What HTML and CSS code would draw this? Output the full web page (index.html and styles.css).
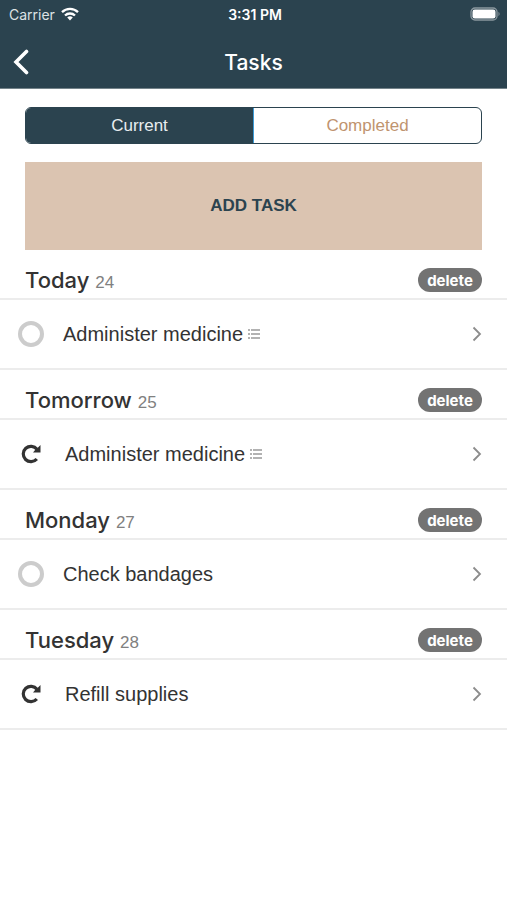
FILE: index.html
```html
<!DOCTYPE html>
<html lang="en">
<head>
<meta charset="utf-8">
<meta name="viewport" content="width=device-width, initial-scale=1">
<title>Tasks</title>
<link rel="stylesheet" href="styles.css">
</head>
<body>
<svg class="defs" aria-hidden="true">
  <symbol id="list" viewBox="0 0 12 10"><path d="M0 1h2M0 5h2M0 9h2M3 1h9M3 5h9M3 9h9" fill="none" stroke="currentColor" stroke-width="1.600"/></symbol>
  <symbol id="chevron" viewBox="0 0 10 16"><path d="M1.500 1.500L8 8l-6.500 6.500" fill="none" stroke="currentColor" stroke-width="1.800"/></symbol>
  <symbol id="repeat" viewBox="0 0 20 20"><path d="M15.800 15A7.700 7.700 0 1 1 16 5.200" fill="none" stroke="currentColor" stroke-width="3.200"/><path d="M19.500 1v7.500H12l2.500-3 2.500-2z" fill="currentColor"/></symbol>
</svg>
<header class="top">
  <div class="status">
    <span class="carrier">Carrier
      <svg width="18" height="14" viewBox="0 0 18 14" aria-hidden="true"><g fill="none" stroke="#fff" stroke-width="2.300"><path d="M1 5.200a11.500 11.500 0 0 1 16 0"/><path d="M4 8.500a7.200 7.200 0 0 1 10 0"/></g><path d="M6.200 10.600a4.200 4.200 0 0 1 5.600 0L9 13.600z" fill="#fff"/></svg>
    </span>
    <span class="time">3:31 PM</span>
    <svg class="battery" width="31" height="14" viewBox="0 0 31 14" aria-hidden="true"><rect x="1" y="1" width="26" height="12" rx="4" fill="none" stroke="#8b989f" stroke-width="1.300"/><rect x="2.500" y="2.500" width="23" height="9" rx="2.300" fill="#fff"/><path d="M28.500 4.800q2.200 2.200 0 4.400z" fill="#8b989f"/></svg>
  </div>
  <div class="nav">
    <button class="back" type="button" aria-label="Back"><svg width="16" height="26" viewBox="0 0 16 26"><path d="M13.500 2.500L3 13l10.500 10.500" fill="none" stroke="#fff" stroke-width="3.600" stroke-linecap="round"/></svg></button>
    <h1>Tasks</h1>
  </div>
</header>
<main>
  <div class="actions">
    <div class="segments">
      <button class="segment active" type="button">Current</button>
      <button class="segment" type="button">Completed</button>
    </div>
    <button class="add" type="button">ADD TASK</button>
  </div>

  <section>
    <div class="day"><h2>Today <small>24</small></h2><button class="delete" type="button">delete</button></div>
    <div class="task">
      <input class="check" id="task1" type="checkbox">
      <label for="task1">Administer medicine</label>
      <svg class="list" aria-hidden="true"><use href="#list"/></svg>
      <button class="open" type="button" aria-label="Open task"><svg class="chevron"><use href="#chevron"/></svg></button>
    </div>
  </section>
  <section>
    <div class="day"><h2>Tomorrow <small>25</small></h2><button class="delete" type="button">delete</button></div>
    <div class="task">
      <svg class="repeat" aria-hidden="true"><use href="#repeat"/></svg>
      <span>Administer medicine</span>
      <svg class="list" aria-hidden="true"><use href="#list"/></svg>
      <button class="open" type="button" aria-label="Open task"><svg class="chevron"><use href="#chevron"/></svg></button>
    </div>
  </section>
  <section>
    <div class="day"><h2>Monday <small>27</small></h2><button class="delete" type="button">delete</button></div>
    <div class="task">
      <input class="check" id="task3" type="checkbox">
      <label for="task3">Check bandages</label>
      <button class="open" type="button" aria-label="Open task"><svg class="chevron"><use href="#chevron"/></svg></button>
    </div>
  </section>
  <section>
    <div class="day"><h2>Tuesday <small>28</small></h2><button class="delete" type="button">delete</button></div>
    <div class="task">
      <svg class="repeat" aria-hidden="true"><use href="#repeat"/></svg>
      <span>Refill supplies</span>
      <button class="open" type="button" aria-label="Open task"><svg class="chevron"><use href="#chevron"/></svg></button>
    </div>
  </section>
</main>
</body>
</html>
```
FILE: styles.css
```css
* { box-sizing: border-box; }

body {
  margin: 0;
  background: #fff;
  color: #333;
  font-family: "Liberation Sans", Arial, sans-serif;
}

button {
  margin: 0;
  padding: 0;
  border: 0;
  background: none;
  color: inherit;
  font: inherit;
}

svg { display: block; }

.defs {
  position: absolute;
  width: 0;
  height: 0;
}

.top {
  background: #2b434f;
  border-bottom: 1px solid #74838a;
  color: #fff;
}

.status,
.nav {
  display: grid;
  grid-template-columns: 1fr auto 1fr;
  align-items: center;
}

.status {
  height: 28px;
  padding: 0 6px 0 9px;
  font: 14px Inter, sans-serif;
}

.carrier {
  display: flex;
  align-items: center;
  gap: 6px;
  color: #dde2e5;
}

.time { font-weight: 600; }

.battery { justify-self: end; }

.nav {
  height: 60px;
  padding: 8px 13px 0;
}

.back { justify-self: start; }

h1,
h2 {
  margin: 0;
  font-family: Inter, sans-serif;
  font-size: 22px;
  font-weight: 500;
}

h1 { font-size: 21px; }

.actions { padding: 18px 25px 0; }

.segments {
  display: flex;
  height: 37px;
  overflow: hidden;
  border: 1px solid #2b434f;
  border-radius: 6px;
}

.segment {
  flex: 1;
  color: #bf946f;
  font-size: 17px;
}

.segment.active {
  border-right: 1px solid #3c9bd6;
  background: #2b434f;
  color: #e8edf0;
}

.add {
  display: block;
  width: 100%;
  height: 88px;
  margin-top: 18px;
  background: #dbc4b1;
  color: #2b434f;
  font-size: 17px;
  font-weight: bold;
}

.day {
  display: flex;
  align-items: center;
  justify-content: space-between;
  height: 50px;
  padding: 12px 25px 0;
  border-bottom: 2px solid #ececec;
}

small {
  color: #808080;
  font: 17px "Liberation Sans", Arial, sans-serif;
}

.delete {
  width: 64px;
  height: 24px;
  border-radius: 12px;
  background: #737373;
  color: #fff;
  font: 700 15px Inter, sans-serif;
}

.task {
  display: flex;
  align-items: center;
  height: 70px;
  padding: 0 25px 0 18px;
  border-bottom: 2px solid #ececec;
  font-size: 20px;
}

.check {
  width: 26px;
  height: 26px;
  margin: 0 19px 0 0;
  appearance: none;
  border: 4px solid #ccc;
  border-radius: 50%;
}

.check:checked { background: #ccc; }

.repeat {
  width: 20px;
  height: 20px;
  margin: 0 24px 0 3px;
}

.list {
  width: 12px;
  height: 10px;
  margin-left: 5px;
  color: #999;
}

.open { margin-left: auto; }

.chevron {
  width: 10px;
  height: 16px;
  color: #8c8c8c;
}
```
